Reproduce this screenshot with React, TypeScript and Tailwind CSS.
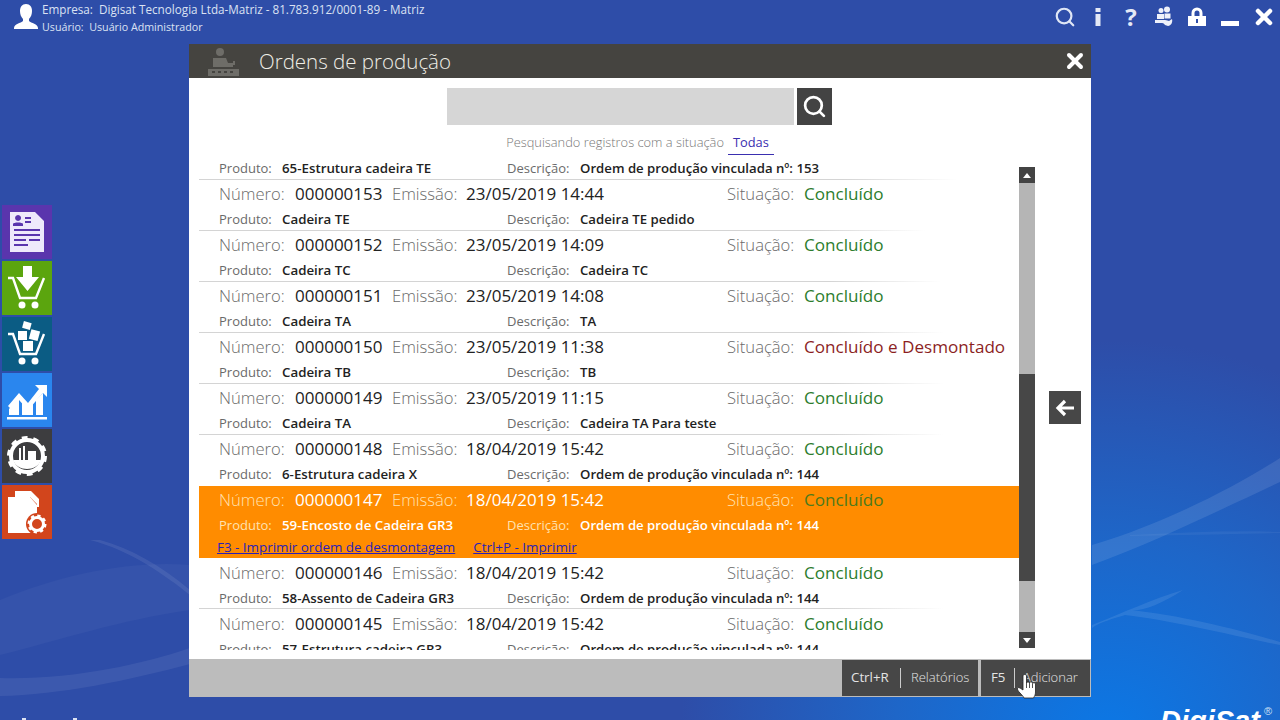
import type { ReactNode } from "react";
import { Search, X } from "lucide-react";

const font = "font-['Open_Sans','Liberation_Sans',sans-serif]";

type Order = {
  num: string;
  date: string;
  status: string;
  product: string;
  desc: string;
  line: number;
  selected?: boolean;
  red?: boolean;
  low?: boolean;
};

const orders: Order[] = [
  { num: "000000154", date: "23/05/2019 14:44", status: "Concluído", product: "65-Estrutura cadeira TE", desc: "Ordem de produção vinculada nº: 153", line: 758 },
  { num: "000000153", date: "23/05/2019 14:44", status: "Concluído", product: "Cadeira TE", desc: "Cadeira TE pedido", line: 726 },
  { num: "000000152", date: "23/05/2019 14:09", status: "Concluído", product: "Cadeira TC", desc: "Cadeira TC", line: 742 },
  { num: "000000151", date: "23/05/2019 14:08", status: "Concluído", product: "Cadeira TA", desc: "TA", line: 745 },
  { num: "000000150", date: "23/05/2019 11:38", status: "Concluído e Desmontado", product: "Cadeira TB", desc: "TB", line: 745, red: true },
  { num: "000000149", date: "23/05/2019 11:15", status: "Concluído", product: "Cadeira TA", desc: "Cadeira TA Para teste", line: 745 },
  { num: "000000148", date: "18/04/2019 15:42", status: "Concluído", product: "6-Estrutura cadeira X", desc: "Ordem de produção vinculada nº: 144", line: 0 },
  { num: "000000147", date: "18/04/2019 15:42", status: "Concluído", product: "59-Encosto de Cadeira GR3", desc: "Ordem de produção vinculada nº: 144", line: 0, selected: true },
  { num: "000000146", date: "18/04/2019 15:42", status: "Concluído", product: "58-Assento de Cadeira GR3", desc: "Ordem de produção vinculada nº: 144", line: 745, low: true },
  { num: "000000145", date: "18/04/2019 15:42", status: "Concluído", product: "57-Estrutura cadeira GR3", desc: "Ordem de produção vinculada nº: 144", line: 745, low: true },
];

function OrderRow({ o }: { o: Order }) {
  const label = o.selected ? "text-[#ffe2b0]" : "text-[#6a6a6a]";
  const value = o.selected ? "text-white" : "text-[#222222]";
  const statusColor = o.selected ? "text-[#4c7a1c]" : o.red ? "text-[#8c1f1f]" : "text-[#2d7d2d]";
  return (
    <div className={o.selected ? "h-[72px] bg-[#ff8c00]" : o.low ? "h-[51px] pt-[1px]" : "h-[51px]"}>
      <div className="flex h-[27px] items-center pl-[20px] pt-[1px] font-light">
        <span className={`w-[76px] text-[16.6px] ${label}`}>Número:</span>
        <span className={`w-[97px] text-[17px] font-normal ${value}`}>{o.num}</span>
        <span className={`w-[74px] text-[16.6px] ${label}`}>Emissão:</span>
        <span className={`w-[261px] text-[17px] font-normal ${value}`}>{o.date}</span>
        <span className={`w-[77px] text-[16.6px] ${label}`}>Situação:</span>
        <span className={`whitespace-nowrap text-[17.1px] font-normal ${statusColor}`}>{o.status}</span>
      </div>
      <div className={`flex items-center pl-[20px] pt-[3px] text-[13px] ${o.low ? "h-[22px]" : "h-[23px]"}`}>
        <span className={`w-[63px] ${label}`}>Produto:</span>
        <span className={`w-[225px] text-[13.3px] font-semibold ${value}`}>{o.product}</span>
        <span className={`w-[73px] ${label}`}>Descrição:</span>
        <span className={`text-[13.2px] font-semibold ${value}`}>{o.desc}</span>
      </div>
      {o.selected ? (
        <div className="flex h-[22px] items-center gap-[18px] pl-[18px] text-[13.4px] text-[#2a1fb8] underline">
          <span>F3 - Imprimir ordem de desmontagem</span>
          <span>Ctrl+P - Imprimir</span>
        </div>
      ) : o.line > 0 ? (
        <div
          className="h-px bg-[linear-gradient(90deg,#d4d4d4_0%,#d4d4d4_85%,#ffffff_100%)]"
          style={{ width: o.line }}
        />
      ) : null}
    </div>
  );
}

function TopIcons() {
  return (
    <div className="flex items-start gap-[11px] self-start pr-[4px] pt-[6px] text-white">
      <Search size={22} strokeWidth={2.4} className="text-[#dfe6f5]" />
      <svg width="22" height="22" viewBox="0 0 22 22" fill="#e4e9f6">
        <rect x="8.500" y="2" width="5" height="4" />
        <rect x="8.500" y="8" width="5" height="12" />
      </svg>
      <span className="w-[22px] text-center text-[24px] font-bold leading-[22px] text-[#e4e9f6]">?</span>
      <svg width="22" height="22" viewBox="0 0 22 22" fill="#eef1fa">
        <circle cx="8" cy="4.500" r="2.500" />
        <circle cx="14" cy="3.500" r="3" />
        <path d="M4 8h7v5H4zM11.500 7.500h6v5h-6z" />
        <path d="M2 14h10c2 0 3 1 4 1l3-2c1 3-1 7-4 7-1 0-2-1-3-1-1-1-1-2-3-2H2z" />
      </svg>
      <svg width="22" height="22" viewBox="0 0 22 22" fill="currentColor">
        <path d="M5.500 10V7a5.500 5.500 0 0 1 11 0v3h-3V7a2.500 2.500 0 0 0-5 0v3z" />
        <path fillRule="evenodd" d="M2 10h18v10H2zM10 13v4h2v-4z" />
      </svg>
      <svg width="22" height="22" viewBox="0 0 22 22" fill="currentColor">
        <rect x="2" y="15" width="18" height="5" />
      </svg>
      <X size={24} strokeWidth={4.5} className="-mt-[1px]" />
    </div>
  );
}

function Tile({ color, children }: { color: string; children: ReactNode }) {
  return <div className={`flex h-[54px] w-[50px] items-center justify-center ${color}`}>{children}</div>;
}

function Cart({ children }: { children?: ReactNode }) {
  return (
    <svg width="40" height="46" viewBox="0 0 40 46" fill="none" stroke="white">
      <path d="M1 13h5l7 20h16l8-20" strokeWidth="2.4" />
      <circle cx="15" cy="40" r="3.500" fill="white" stroke="none" />
      <circle cx="28" cy="40" r="3.500" fill="white" stroke="none" />
      {children}
    </svg>
  );
}

function GearRing({ cx, cy, r, width, teeth }: { cx: number; cy: number; r: number; width: number; teeth: number }) {
  const dash = (2 * Math.PI * (r + width / 2)) / (teeth * 2);
  return (
    <g fill="none" stroke="white">
      <circle cx={cx} cy={cy} r={r} strokeWidth={width} />
      <circle cx={cx} cy={cy} r={r + width / 2} strokeWidth={width} strokeDasharray={`${dash} ${dash}`} />
    </g>
  );
}

function SideTiles() {
  return (
    <div className="flex flex-col gap-[2px] pl-[2px] pt-[161px]">
      <Tile color="bg-[#5a35ad]">
        <svg width="36" height="42" viewBox="0 0 36 42" fill="#eee9fb">
          <path
            fillRule="evenodd"
            d="M1 1h25l9 9v31H1zM5 18v2h26v-2zM5 23v2h26v-2zM5 28v2h12v-2zM20 28v2h11v-2zM5 33v2h14v-2zM16 6v2h6V6zM16 10v2h6v-2zM9 4a3 3 0 1 0 .1 0zM4 15h10v-2c0-2-10-2-10 0z"
          />
        </svg>
      </Tile>
      <Tile color="bg-[#5ba50e]">
        <Cart>
          <path d="M16 1h9v11h7L20.500 26 9 12h7z" fill="white" stroke="none" />
        </Cart>
      </Tile>
      <Tile color="bg-[#0b5c84]">
        <Cart>
          <g fill="white" stroke="none">
            <rect x="16" y="1" width="8" height="7" transform="rotate(15 20 4)" />
            <rect x="11" y="10" width="9" height="9" />
            <rect x="23" y="9" width="9" height="10" transform="rotate(15 27 14)" />
            <rect x="16" y="20" width="10" height="10" />
          </g>
        </Cart>
      </Tile>
      <Tile color="bg-[#2a86ee]">
        <svg width="42" height="44" viewBox="0 0 42 44" fill="white">
          <path d="M2 28 13 15l9 10L33 11l-4-4h12v12l-4-4-15 17-9-10-8 9z" />
          <path d="M3 37v-6l10-11v17zM16 37V22l6 7 5-5v13zM30 37V22l7-7v22z" />
          <rect x="1" y="39" width="40" height="2.500" />
        </svg>
      </Tile>
      <Tile color="bg-[#3d3d3f]">
        <svg width="44" height="44" viewBox="0 0 44 44" fill="white">
          <GearRing cx={22} cy={22} r={16} width={4} teeth={10} />
          <path d="M8 26h28c-2 6-8 9-14 9s-12-3-14-9z" />
          <path d="M14 14h2v12h-2zM18 12h2v14h-2zM23 17h8v9h-8z" />
        </svg>
      </Tile>
      <Tile color="bg-[#d2451c]">
        <svg width="44" height="46" viewBox="0 0 44 46" fill="white">
          <path d="M3 8h22l7 8v28H3z" />
          <path d="M10 2h16l8 8v8h-2v-3l-7-7H10z" />
          <circle cx="32" cy="35" r="11" fill="#d2451c" />
          <GearRing cx={32} cy={35} r={6.500} width={3} teeth={8} />
        </svg>
      </Tile>
    </div>
  );
}

function Wallpaper() {
  return (
    <svg className="absolute inset-0" width="1280" height="720" viewBox="0 0 1280 720" fill="white">
      <path d="M0 600C60 575 130 560 190 565L190 610C120 620 60 640 0 655z" opacity="0.035" />
      <path d="M0 678C70 680 140 665 190 648L190 664C130 680 60 695 0 696z" opacity="0.07" />
      <path d="M90 540C130 550 165 575 190 595L190 590C160 565 130 548 100 540z" opacity="0.08" />
      <path d="M1092 545C1160 525 1230 490 1280 458L1280 482C1230 505 1160 540 1092 565z" opacity="0.1" />
      <path d="M1092 625C1125 612 1150 600 1183 590C1160 605 1140 612 1130 610C1180 615 1240 630 1280 642L1280 645C1230 635 1170 620 1125 615C1115 618 1100 622 1092 628z" opacity="0.09" />
      <path d="M1130 535C1180 533 1230 530 1280 532L1280 533C1230 534 1180 535 1130 536z" opacity="0.05" />
    </svg>
  );
}

export default function App() {
  return (
    <div className={`relative h-[720px] w-[1280px] overflow-hidden bg-[radial-gradient(ellipse_430px_400px_at_1110px_740px,#0b78e6_0%,#1e66c8_50%,#2e4da8_100%)] bg-[#2d4ba6] ${font}`}>
      <Wallpaper />
      <div className="absolute bottom-[-23px] right-[8px] flex items-start font-['Liberation_Sans',sans-serif] text-[29px] font-bold italic text-white">
        DigiSat
        <span className="ml-[4px] mt-[3px] text-[11px] font-normal not-italic text-[#cfe0f5]">®</span>
      </div>
      <div className="absolute bottom-0 left-[22px] h-[2px] w-[4px] bg-[#dbe2f3]" />
      <div className="absolute bottom-0 left-[73px] h-[2px] w-[4px] bg-[#dbe2f3]" />

      <div className="relative flex h-[44px] justify-between">
        <div className="flex">
          <svg className="ml-[14px] mt-[3px]" width="24" height="28" viewBox="0 0 24 28" fill="white">
            <path d="M12 1c4 0 6 3 6 7 0 3-1 6-3 8v2c2 2 9 3 9 7v1H0v-1c0-4 7-5 9-7v-2c-2-2-3-5-3-8 0-4 2-7 6-7z" />
          </svg>
          <div className="ml-[4px] text-[#dbe2f3]">
            <div className="text-[11.7px] leading-[18px]">
              Empresa:&nbsp; Digisat Tecnologia Ltda-Matriz - 81.783.912/0001-89 - Matriz
            </div>
            <div className="text-[10.7px] leading-[18px]">Usuário:&nbsp; Usuário Administrador</div>
          </div>
        </div>
        <TopIcons />
      </div>

      <div className="relative flex">
        <div className="w-[189px]">
          <SideTiles />
        </div>

        <div className="flex h-[653px] w-[902px] flex-col">
          <div className="flex h-[34px] items-center justify-between bg-[#454440] pl-[19px] pr-[4px]">
            <div className="flex items-center gap-[20px]">
              <svg width="31" height="30" viewBox="0 0 31 30" fill="#6e6d68">
                <circle cx="12" cy="6" r="4" />
                <path d="M5 12h13l2 5h5v-2h2v4h-2v2H5z" />
                <path fillRule="evenodd" d="M0 23h31v7H0zM4 25v2h3v-2zM10 25v2h3v-2zM16 25v2h3v-2zM22 25v2h3v-2z" />
              </svg>
              <span className="text-[20.5px] font-light text-[#efeee6]">Ordens de produção</span>
            </div>
            <X size={24} strokeWidth={4} className="text-white" />
          </div>

          <div className="flex min-h-0 flex-1 flex-col bg-white">
            <div className="flex justify-center gap-[3px] pr-[2px] pt-[10px]">
              <div className="h-[37px] w-[347px] bg-[#d6d6d6]" />
              <div className="flex h-[37px] w-[35px] items-center justify-center bg-[#434343]">
                <Search size={25} strokeWidth={2.6} className="text-white" />
              </div>
            </div>
            <div className="flex h-[36px] items-start justify-center gap-[4px] pt-[8px] text-[12.85px] leading-[18px]">
              <span className="font-light text-[#777777]">Pesquisando registros com a situação</span>
              <span className="border-b border-[#3a2fb0] px-[5px] pb-[3px] text-[#3a2fb0]">Todas</span>
            </div>

            <div className="flex pl-[10px] pt-[2px]">
              <div className="h-[487px] w-[820px] overflow-hidden">
                <div className="-mt-[34px]">
                  {orders.map((o) => (
                    <OrderRow key={o.num} o={o} />
                  ))}
                </div>
              </div>
              <div className="mt-[4px] flex h-[481px] w-[16px] flex-col bg-[#b5b5b5]">
                <div className="flex h-[16px] items-center justify-center bg-[#434343]">
                  <div className="h-0 w-0 border-x-[4px] border-b-[5px] border-x-transparent border-b-white" />
                </div>
                <div className="mt-[191px] h-[207px] bg-[#474747]" />
                <div className="mt-auto flex h-[16px] items-center justify-center bg-[#434343]">
                  <div className="h-0 w-0 border-x-[4px] border-t-[5px] border-x-transparent border-t-white" />
                </div>
              </div>
              <div className="ml-[14px] mt-[228px] flex h-[33px] w-[32px] items-center justify-center bg-[#474747]">
                <svg width="20" height="18" viewBox="0 0 20 18" fill="none" stroke="white" strokeWidth="3.2">
                  <path d="M19 9H3M10 2 3 9l7 7" />
                </svg>
              </div>
            </div>
          </div>

          <div className="flex h-[38px] items-center justify-end gap-[3px] bg-[#bcbcbc] pr-[1px] text-[#e4e4e4]">
            <div className="flex h-[36px] w-[136px] items-center bg-[#474747] text-[13.3px]">
              <span className="w-[59px] border-r border-[#cccccc] pl-[9px]">Ctrl+R</span>
              <span className="pl-[10px] text-[13px] font-light">Relatórios</span>
            </div>
            <div className="relative flex h-[36px] w-[109px] items-center bg-[#474747] text-[13.3px]">
              <span className="w-[34px] border-r border-[#cccccc] pl-[10px]">F5</span>
              <span className="pl-[8px] text-[13px] font-light">Adicionar</span>
              <svg className="absolute left-[36px] top-[14px]" width="20" height="27" viewBox="0 0 20 27" fill="white" stroke="#222222" strokeWidth="0.8">
                <path d="M6 2c0-2 3.500-2 3.500 0v7c0-1.500 3-1.500 3 0 0-1.500 3-1.500 3 .5 0-1 3-1 3 .5v8c0 3-1 4-2 6H7c-1-2-2-3-4-5-2-2-3-4-2.500-5s2-.5 5.500 2z" />
                <path d="M9.500 9v5M12.500 9v5M15.500 10v4" fill="none" />
              </svg>
            </div>
          </div>
        </div>
      </div>
    </div>
  );
}
